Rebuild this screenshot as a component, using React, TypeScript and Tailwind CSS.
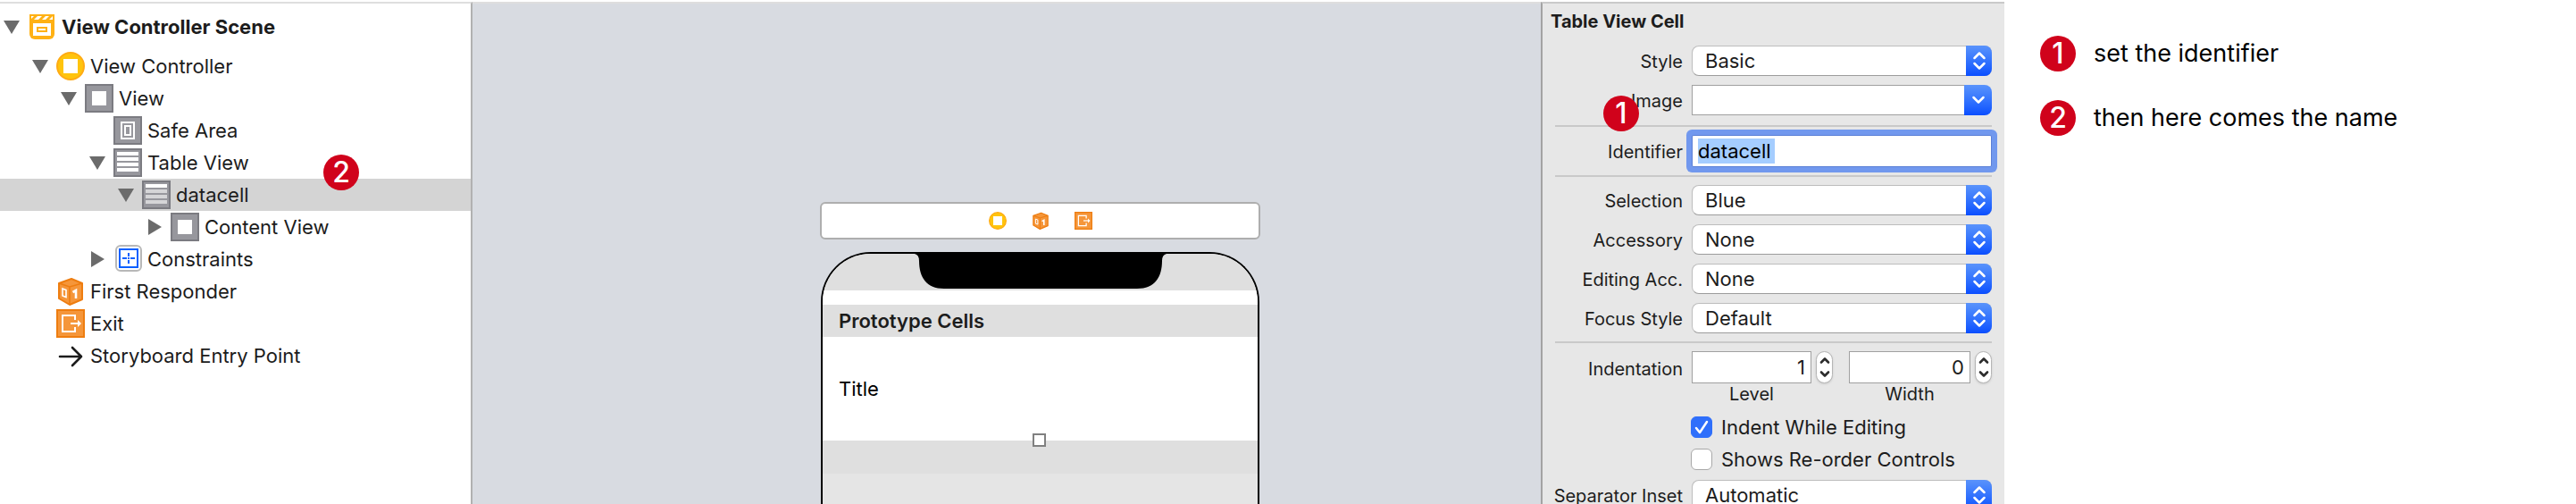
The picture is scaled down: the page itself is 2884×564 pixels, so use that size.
import React from "react";

type IconName = "scene" | "controller" | "view" | "safe" | "table" | "cell" | "constraints" | "responder" | "exit" | "entry";

function Icon({ name, className }: { name: IconName; className: string }) {
  return (
    <svg viewBox="0 0 32 32" className={className} aria-hidden="true">
      {name === "scene" && (
        <g>
          <path d="M2 2h28v22a6 6 0 0 1-6 6H8a6 6 0 0 1-6-6z" fill="#ffb114" />
          <path d="M4 4h24v4H4z" fill="#fff" />
          <path d="M4 8V7l3-3h4L7 8zM12 8l4-4h4l-4 4zM20 8l4-4h4l-4 4z" fill="#ffb114" />
          <path d="M6 12h20v14H6z" fill="#fff" />
          <rect x="11" y="17" width="10" height="4" fill="none" stroke="#ffb114" strokeWidth="2" />
        </g>
      )}
      {name === "controller" && (
        <g>
          <circle cx="16" cy="16" r="15" fill="#ffc40d" stroke="#ffab14" strokeWidth="2" />
          <rect x="8" y="8" width="16" height="16" fill="#fff" />
        </g>
      )}
      {(name === "view" || name === "safe" || name === "table" || name === "cell") && (
        <rect x="1" y="1" width="30" height="30" fill="#97979d" stroke="#7b7b81" strokeWidth="2" />
      )}
      {name === "view" && <rect x="8" y="8" width="16" height="16" fill="#fff" />}
      {name === "safe" && (
        <g fill="none" stroke="#fff" strokeWidth="2">
          <rect x="9" y="7" width="14" height="18" />
          <rect x="13" y="11" width="6" height="10" />
        </g>
      )}
      {name === "table" && (
        <path d="M4 4h24v4H4zM4 10h24v4H4zM4 16h24v4H4zM4 22h24v4H4z" fill="#fff" />
      )}
      {name === "cell" && (
        <g>
          <path d="M4 4h24v4H4z" fill="#fff" />
          <path d="M4 10h24v4H4zM4 16h24v4H4zM4 22h24v4H4z" fill="#d5d5d7" />
        </g>
      )}
      {name === "constraints" && (
        <g fill="none">
          <rect x="3" y="1" width="28" height="28" rx="5" fill="#fff" stroke="#b8b8b8" strokeWidth="2" />
          <rect x="7" y="5" width="20" height="20" stroke="#0a60ff" strokeWidth="2" />
          <path d="M17 9v4M17 17v4M10 15h5M19 15h5M16 15h2" stroke="#0a60ff" strokeWidth="2" />
        </g>
      )}
      {name === "responder" && (
        <g>
          <path d="M17 2l12 5v18l-14 6L3 24V7z" fill="#f5963a" stroke="#ee7d10" strokeWidth="2" strokeLinejoin="round" />
          <path d="M3 7l12 4 14-4M15 11v20" fill="none" stroke="#ee7d10" strokeWidth="1.6" />
          <path d="M7 13l4 1.500v8L7 21z" fill="none" stroke="#fff" strokeWidth="1.600" />
          <path d="M18.500 17l3.500-2v9" fill="none" stroke="#fff" strokeWidth="2.600" />
        </g>
      )}
      {name === "exit" && (
        <g fill="none">
          <rect x="1" y="1" width="30" height="30" fill="#f5963a" stroke="#ee7d10" strokeWidth="2" />
          <path d="M21 12V7H7v18h14v-5" stroke="#fff" strokeWidth="2" />
          <path d="M16 16h10" stroke="#fff" strokeWidth="2" />
          <path d="M24 12l4 4-4 4z" fill="#fff" />
        </g>
      )}
      {name === "entry" && (
        <path d="M4 17h24M18 7l10 10-10 10" fill="none" stroke="#1c1c1c" strokeWidth="2.600" strokeLinecap="round" strokeLinejoin="round" />
      )}
    </svg>
  );
}

type Row = { label: string; icon: IconName; indent: string; arrow?: "open" | "closed"; selected?: boolean };

const rows: Row[] = [
  { label: "View Controller", icon: "controller", indent: "pl-8", arrow: "open" },
  { label: "View", icon: "view", indent: "pl-16", arrow: "open" },
  { label: "Safe Area", icon: "safe", indent: "pl-24" },
  { label: "Table View", icon: "table", indent: "pl-24", arrow: "open" },
  { label: "datacell", icon: "cell", indent: "pl-32", arrow: "open", selected: true },
  { label: "Content View", icon: "view", indent: "pl-40", arrow: "closed" },
  { label: "Constraints", icon: "constraints", indent: "pl-24", arrow: "closed" },
  { label: "First Responder", icon: "responder", indent: "pl-8" },
  { label: "Exit", icon: "exit", indent: "pl-8" },
  { label: "Storyboard Entry Point", icon: "entry", indent: "pl-8" },
];

function Arrow({ state }: { state?: "open" | "closed" }) {
  return (
    <span className="flex w-[31px] shrink-0 pl-1">
      {state && (
        <button type="button" aria-label={state === "open" ? "Collapse" : "Expand"} className="block">
          <svg viewBox="0 0 18 18" className="size-[18px]">
            <path d={state === "open" ? "M0 2h18L9 17z" : "M2 0v18l15-9z"} fill="#6b6b6b" />
          </svg>
        </button>
      )}
    </span>
  );
}

function Badge({ n }: { n: number }) {
  return (
    <span className="flex size-10 shrink-0 items-center justify-center rounded-full bg-[#d0021b] text-[32px] leading-none font-medium text-white">
      {n}
    </span>
  );
}

function Outline() {
  return (
    <nav className="relative w-[529px] shrink-0 border-t-2 border-r-2 border-t-[#dedede] border-r-[#b1b1b1] bg-white text-[22px] text-[#1c1c1c]">
      <div className="flex h-[52px] items-center font-bold">
        <Arrow state="open" />
        <Icon name="scene" className="size-8 shrink-0" />
        <span className="pl-[6px]">View Controller Scene</span>
      </div>
      <ul>
        {rows.map((r) => (
          <li key={r.label} className={`flex h-9 items-center ${r.indent} ${r.selected ? "bg-[#d4d4d4]" : ""}`}>
            <Arrow state={r.arrow} />
            <Icon name={r.icon} className="size-8 shrink-0" />
            <span className="pl-[6px]">{r.label}</span>
          </li>
        ))}
      </ul>
      <div className="absolute top-[169px] left-[362px]">
        <Badge n={2} />
      </div>
    </nav>
  );
}

function Canvas() {
  return (
    <main className="flex min-w-0 flex-1 flex-col items-center border-t-2 border-[#dedede] bg-[#d8dbe1] pt-[222px] pl-[75px] text-black">
      <div className="flex h-[42px] w-[493px] shrink-0 items-center justify-center gap-7 rounded-md border-2 border-[#aeaeae] bg-white">
        <Icon name="controller" className="size-5" />
        <Icon name="responder" className="size-5" />
        <Icon name="exit" className="size-5" />
      </div>
      <div className="mt-[14px] flex w-[491px] flex-1 flex-col overflow-hidden rounded-t-[56px] border-x-2 border-t-2 border-black bg-[#e5e5e5]">
        <div className="flex h-[41px] shrink-0 justify-center bg-[#dfdfdf]">
          <svg viewBox="0 0 282 40" className="h-10 w-[282px]" aria-hidden="true">
            <path d="M0 0h282q-5 1-5 8c0 18-8 31-28 31H33C13 39 5 26 5 8q0-7-5-8z" fill="#000" />
          </svg>
        </div>
        <div className="h-4 shrink-0 bg-white" />
        <h2 className="flex h-9 shrink-0 items-center bg-[#dfdfdf] pl-[18px] text-[22px] font-semibold text-[#1c1c1c]">Prototype Cells</h2>
        <div className="relative flex h-[116px] shrink-0 items-center bg-white pl-[18px] text-[22px]">
          Title
          <span className="absolute -bottom-[7px] left-[235px] size-[15px] border-2 border-[#808080] bg-white" />
        </div>
        <div className="h-[37px] shrink-0 bg-[#dfdfdf]" />
      </div>
    </main>
  );
}

function Chevrons() {
  return (
    <svg viewBox="0 0 16 24" className="h-6 w-4" fill="none" stroke="currentColor" strokeWidth="2.500" strokeLinecap="round" strokeLinejoin="round" aria-hidden="true">
      <path d="M2.500 9L8 3.500 13.500 9M2.500 15L8 20.500 13.500 15" />
    </svg>
  );
}

const rowClass = "grid grid-cols-[148px_minmax(0,1fr)] gap-x-[10px] items-center";
const labelClass = "pt-[2px] text-right text-[20px] text-[#1c1c1c] whitespace-nowrap";

function Select({ id, label, value }: { id: string; label: string; value: string }) {
  return (
    <div className={rowClass}>
      <label htmlFor={id} className={labelClass}>{label}</label>
      <div className="relative">
        <select id={id} defaultValue={value} className="block h-[34px] w-full appearance-none rounded-lg border border-[#bdbdbd] border-b-[#9c9c9c] bg-white pl-[14px] text-[22px] leading-7 text-[#1c1c1c]">
          <option>{value}</option>
        </select>
        <span className="pointer-events-none absolute inset-y-0 right-0 flex w-[29px] items-center justify-center rounded-r-lg bg-linear-to-b from-[#5a93fb] to-[#0a4dff] text-white">
          <Chevrons />
        </span>
      </div>
    </div>
  );
}

function NumberField({ id, label, value, className }: { id: string; label: string; value: string; className: string }) {
  return (
    <div className={`grid gap-x-[5px] ${className}`}>
      <input id={id} defaultValue={value} className="h-9 min-w-0 border border-[#a0a0a0] bg-white pr-[6px] text-right text-[22px] text-[#1c1c1c]" />
      <button type="button" aria-label={`Change ${label}`} className="flex h-9 items-center justify-center rounded-full border border-[#b5b5b5] bg-white text-[#2c2c2c] shadow-sm">
        <svg viewBox="0 0 12 24" className="h-6 w-3 shrink-0" fill="none" stroke="currentColor" strokeWidth="2.600" strokeLinecap="round" strokeLinejoin="round" aria-hidden="true">
          <path d="M2 6.500L6 2.500 10 6.500M2 17.500L6 21.500 10 17.500" />
        </svg>
      </button>
      <label htmlFor={id} className="text-center text-[20px] leading-6">{label}</label>
    </div>
  );
}

function Check({ id, label, checked }: { id: string; label: string; checked?: boolean }) {
  return (
    <div className="flex h-9 items-center gap-[10px] pl-[157px]">
      <span className="relative size-6">
        <input id={id} type="checkbox" defaultChecked={checked} className="peer block size-6 appearance-none rounded-md border border-[#a8a8a8] bg-white checked:border-[#2f6ffb] checked:bg-[#2f6ffb]" />
        <svg viewBox="0 0 24 24" className="pointer-events-none absolute inset-0 hidden size-6 peer-checked:block" aria-hidden="true">
          <path d="M6 13l4 5 8-12" fill="none" stroke="#fff" strokeWidth="2.500" strokeLinecap="round" strokeLinejoin="round" />
        </svg>
      </span>
      <label htmlFor={id} className="text-[22px]">{label}</label>
    </div>
  );
}

const Divider = ({ className }: { className: string }) => <hr className={`ml-[5px] border-0 border-t-2 border-[#c9c9c9] ${className}`} />;

function Inspector() {
  return (
    <aside className="relative w-[519px] shrink-0 overflow-hidden border-t-2 border-l-2 border-t-[#c9c9c9] border-l-[#a3a3a3] bg-[#e7e7e7] pr-[14px] pl-[9px] text-[#1c1c1c]">
      <h2 className="mb-[9px] pt-[2px] text-[20px] leading-9 font-bold">Table View Cell</h2>
      <div className="flex flex-col gap-[10px]">
        <Select id="style" label="Style" value="Basic" />
        <div className={rowClass}>
          <label htmlFor="image" className={labelClass}>Image</label>
          <div className="flex h-[34px]">
            <input id="image" className="min-w-0 flex-1 border border-r-0 border-[#a0a0a0] bg-white pl-1 text-[22px]" />
            <button type="button" aria-label="Choose image" className="flex w-[31px] shrink-0 items-center justify-center rounded-r-lg bg-linear-to-b from-[#5a93fb] to-[#0a4dff]">
              <svg viewBox="0 0 16 10" className="h-[10px] w-4" fill="none" stroke="#fff" strokeWidth="2.500" strokeLinecap="round" strokeLinejoin="round" aria-hidden="true">
                <path d="M2.500 2L8 7.500 13.500 2" />
              </svg>
            </button>
          </div>
        </div>
      </div>
      <Divider className="mt-[11px] mb-[9px]" />
      <div className={rowClass}>
        <label htmlFor="identifier" className={labelClass}>Identifier</label>
        <div className="flex h-9 items-center rounded-xs border border-[#5a7fd6] bg-white pl-[6px] ring-6 ring-[#7198ee]">
          <input id="identifier" defaultValue="datacell" className="h-7 w-[86px] bg-[#a5cdff] text-[22px] text-black outline-none" />
        </div>
      </div>
      <Divider className="my-[9px]" />
      <div className="flex flex-col gap-[10px]">
        <Select id="selection" label="Selection" value="Blue" />
        <Select id="accessory" label="Accessory" value="None" />
        <Select id="editing" label="Editing Acc." value="None" />
        <Select id="focus" label="Focus Style" value="Default" />
      </div>
      <Divider className="my-[9px]" />
      <div className={`${rowClass} !items-start`}>
        <span className={`${labelClass} leading-9`}>Indentation</span>
        <div className="flex justify-between">
          <NumberField id="level" label="Level" value="1" className="grid-cols-[134px_19px]" />
          <NumberField id="width" label="Width" value="0" className="grid-cols-[136px_19px]" />
        </div>
      </div>
      <div className="mt-[7px] mb-[5px]">
        <Check id="indent" label="Indent While Editing" checked />
        <Check id="reorder" label="Shows Re-order Controls" />
      </div>
      <Select id="separator" label="Separator Inset" value="Automatic" />
      <div className="absolute top-[103px] left-[68px]">
        <Badge n={1} />
      </div>
    </aside>
  );
}

export default function App() {
  return (
    <div className="flex h-screen overflow-hidden bg-white pt-[2px] font-['Inter',sans-serif]">
      <div className="flex min-w-0 flex-1">
        <Outline />
        <Canvas />
        <Inspector />
      </div>
      <ol className="flex w-[640px] shrink-0 flex-col gap-8 pt-[38px] pl-10 text-[27px] leading-9 text-black">
        <li className="flex items-center gap-5"><Badge n={1} />set the identifier</li>
        <li className="flex items-center gap-5"><Badge n={2} />then here comes the name</li>
      </ol>
    </div>
  );
}
